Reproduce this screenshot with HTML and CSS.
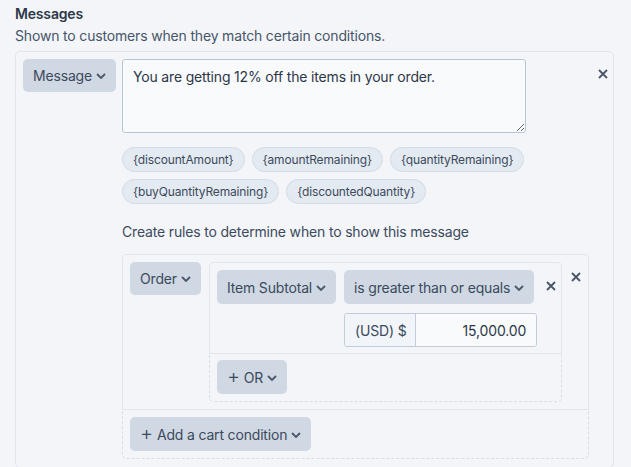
FILE: index.html
```html
<!DOCTYPE html>
<html lang="en">

<head>
    <meta charset="UTF-8">
    <meta name="viewport" content="width=device-width, initial-scale=1.0">
    <title>Messages</title>
    <link rel="stylesheet" href="styles.css">
</head>

<body>

    <div class="section">
        <h2 class="section-title">Messages</h2>
        <p class="section-help">Shown to customers when they match certain conditions.</p>

        <div class="message-card">
            <div class="message-row">
                <button class="btn">Message
                    <svg class="chev" viewBox="0 0 10 6"><path d="M1 1l4 4 4-4" /></svg>
                </button>

                <div class="message-body">
                    <textarea class="message-text">You are getting 12% off the items in your order.</textarea>

                    <div class="tokens">
                        <span class="token">{discountAmount}</span>
                        <span class="token">{amountRemaining}</span>
                        <span class="token">{quantityRemaining}</span>
                        <span class="token">{buyQuantityRemaining}</span>
                        <span class="token">{discountedQuantity}</span>
                    </div>

                    <p class="rules-help">Create rules to determine when to show this message</p>

                    <div class="rules">
                        <div class="rules-main">
                            <div class="rule-row">
                                <button class="btn">Order
                                    <svg class="chev" viewBox="0 0 10 6"><path d="M1 1l4 4 4-4" /></svg>
                                </button>

                                <div class="condition">
                                    <div class="condition-main">
                                        <div class="condition-row">
                                            <button class="btn">Item Subtotal
                                                <svg class="chev" viewBox="0 0 10 6"><path d="M1 1l4 4 4-4" /></svg>
                                            </button>
                                            <div class="condition-fields">
                                                <button class="btn">is greater than or equals
                                                    <svg class="chev" viewBox="0 0 10 6"><path d="M1 1l4 4 4-4" /></svg>
                                                </button>
                                                <div class="money">
                                                    <span class="money-prefix">(USD) $</span>
                                                    <span class="money-value">15,000.00</span>
                                                </div>
                                            </div>
                                            <span class="close close-inner">
                                                <svg viewBox="0 0 10 10"><path d="M1 1l8 8M9 1l-8 8" /></svg>
                                            </span>
                                        </div>
                                    </div>
                                    <div class="condition-foot">
                                        <button class="btn"><span class="plus">+</span>OR
                                            <svg class="chev" viewBox="0 0 10 6"><path d="M1 1l4 4 4-4" /></svg>
                                        </button>
                                    </div>
                                </div>

                                <span class="close close-rule">
                                    <svg viewBox="0 0 10 10"><path d="M1 1l8 8M9 1l-8 8" /></svg>
                                </span>
                            </div>
                        </div>
                        <div class="rules-foot">
                            <button class="btn"><span class="plus">+</span>Add a cart condition
                                <svg class="chev" viewBox="0 0 10 6"><path d="M1 1l4 4 4-4" /></svg>
                            </button>
                        </div>
                    </div>
                </div>

                <span class="close close-message">
                    <svg viewBox="0 0 10 10"><path d="M1 1l8 8M9 1l-8 8" /></svg>
                </span>
            </div>
        </div>
    </div>

</body>

</html>
```

FILE: styles.css
```css
body {
    margin: 0;
    padding: 0;
    background: #f3f5f9;
    font-family: Inter, "Noto Sans", sans-serif;
    font-size: 14px;
    letter-spacing: -0.17px;
    color: #334155;
    overflow: hidden;
}

.section {
    padding: 5px 17px 0 15px;
}

.section-title {
    margin: 0;
    font-size: 14px;
    font-weight: 600;
    line-height: 17px;
    color: #2d3748;
}

.section-help {
    margin: 5px 0 0;
    line-height: 17px;
    color: #475569;
}

/* Message card */
.message-card {
    margin-top: 7px;
    border: 1px solid #e0e6ee;
    border-radius: 5px;
    padding: 7px 6px 8px 7px;
}

.message-row {
    display: flex;
    align-items: flex-start;
}

.message-body {
    margin-left: 6px;
    width: 467px;
    flex-shrink: 0;
}

.btn {
    display: inline-flex;
    align-items: center;
    gap: 4px;
    height: 33px;
    padding: 0 10px;
    border: none;
    border-radius: 5px;
    background: #cfd8e3;
    color: #3c4a5c;
    font-family: inherit;
    font-size: 14px;
    letter-spacing: -0.17px;
    white-space: nowrap;
    flex-shrink: 0;
}

.chev {
    width: 10px;
    height: 6px;
    flex-shrink: 0;
    fill: none;
    stroke: #4b5668;
    stroke-width: 1.8;
    margin-top: 1px;
}

.plus {
    font-size: 20px;
    font-weight: 300;
    line-height: 1;
    margin-top: -2px;
}

.close {
    display: inline-flex;
    width: 12px;
    height: 12px;
    flex-shrink: 0;
}

.close svg {
    width: 10px;
    height: 10px;
    fill: none;
    stroke: #4a5568;
    stroke-width: 1.8;
}

.close-message {
    margin-left: 9px;
    margin-top: 10px;
}

.message-text {
    display: block;
    box-sizing: border-box;
    width: 404px;
    height: 74px;
    padding: 8px 10px;
    border: 1px solid #b9c5d4;
    border-radius: 3px;
    background: #f8fafc;
    color: #2d3748;
    font-family: inherit;
    font-size: 14px;
    letter-spacing: -0.17px;
    line-height: 17px;
    resize: vertical;
}

/* Placeholder tokens */
.tokens {
    display: flex;
    flex-wrap: wrap;
    gap: 7px;
    margin-top: 14px;
    width: 420px;
}

.token {
    box-sizing: border-box;
    height: 25px;
    line-height: 23px;
    padding: 0 10px;
    border: 1px solid #d2dbe6;
    border-radius: 13px;
    background: #e4eaf2;
    font-size: 12px;
    letter-spacing: -0.15px;
    color: #3c4a5c;
}

.rules-help {
    margin: 19px 0 0;
    line-height: 17px;
    color: #3c4a5c;
}

/* Rules box */
.rules {
    margin-top: 14px;
}

.rules-main {
    border: 1px solid #dfe5ed;
    border-bottom: none;
    border-radius: 5px 5px 0 0;
    padding: 7px;
}

.rule-row {
    display: flex;
    align-items: flex-start;
}

.condition {
    margin-left: 8px;
    width: 353px;
    flex-shrink: 0;
}

.condition-main {
    border: 1px solid #dfe5ed;
    border-bottom: none;
    border-radius: 5px 5px 0 0;
    padding: 7px 7px 6px 7px;
}

.condition-row {
    display: flex;
    align-items: flex-start;
}

.condition-row > .btn {
    height: 34px;
}

.condition-fields {
    margin-left: 8px;
    display: flex;
    flex-direction: column;
    align-items: flex-start;
    gap: 9px;
    width: 193px;
    flex-shrink: 0;
}

.condition-fields .btn {
    height: 34px;
}

.close-inner {
    margin-left: 9px;
    margin-top: 11px;
}

.close-rule {
    margin-left: 9px;
    margin-top: 10px;
}

.money {
    display: flex;
    width: 193px;
    height: 34px;
    box-sizing: border-box;
    border: 1px solid #c3cdda;
    border-radius: 3px;
    overflow: hidden;
}

.money-prefix {
    display: flex;
    align-items: center;
    box-sizing: border-box;
    width: 71px;
    padding: 0 10px;
    white-space: nowrap;
    border-right: 1px solid #c3cdda;
    background: #f1f4f8;
    color: #3c4a5c;
}

.money-value {
    flex: 1;
    display: flex;
    align-items: center;
    justify-content: flex-end;
    padding: 0 10px;
    background: #f8fafc;
    color: #2d3748;
}

.condition-foot {
    border: 1px dashed #d6dde7;
    border-top: 1px solid #dfe5ed;
    border-radius: 0 0 5px 5px;
    padding: 6px 7px 7px 7px;
}

.condition-foot .btn {
    height: 34px;
}

.rules-foot {
    border: 1px dashed #d6dde7;
    border-top: 1px solid #dfe5ed;
    border-radius: 0 0 5px 5px;
    padding: 7px;
}

.rules-foot .btn {
    height: 34px;
}
```
